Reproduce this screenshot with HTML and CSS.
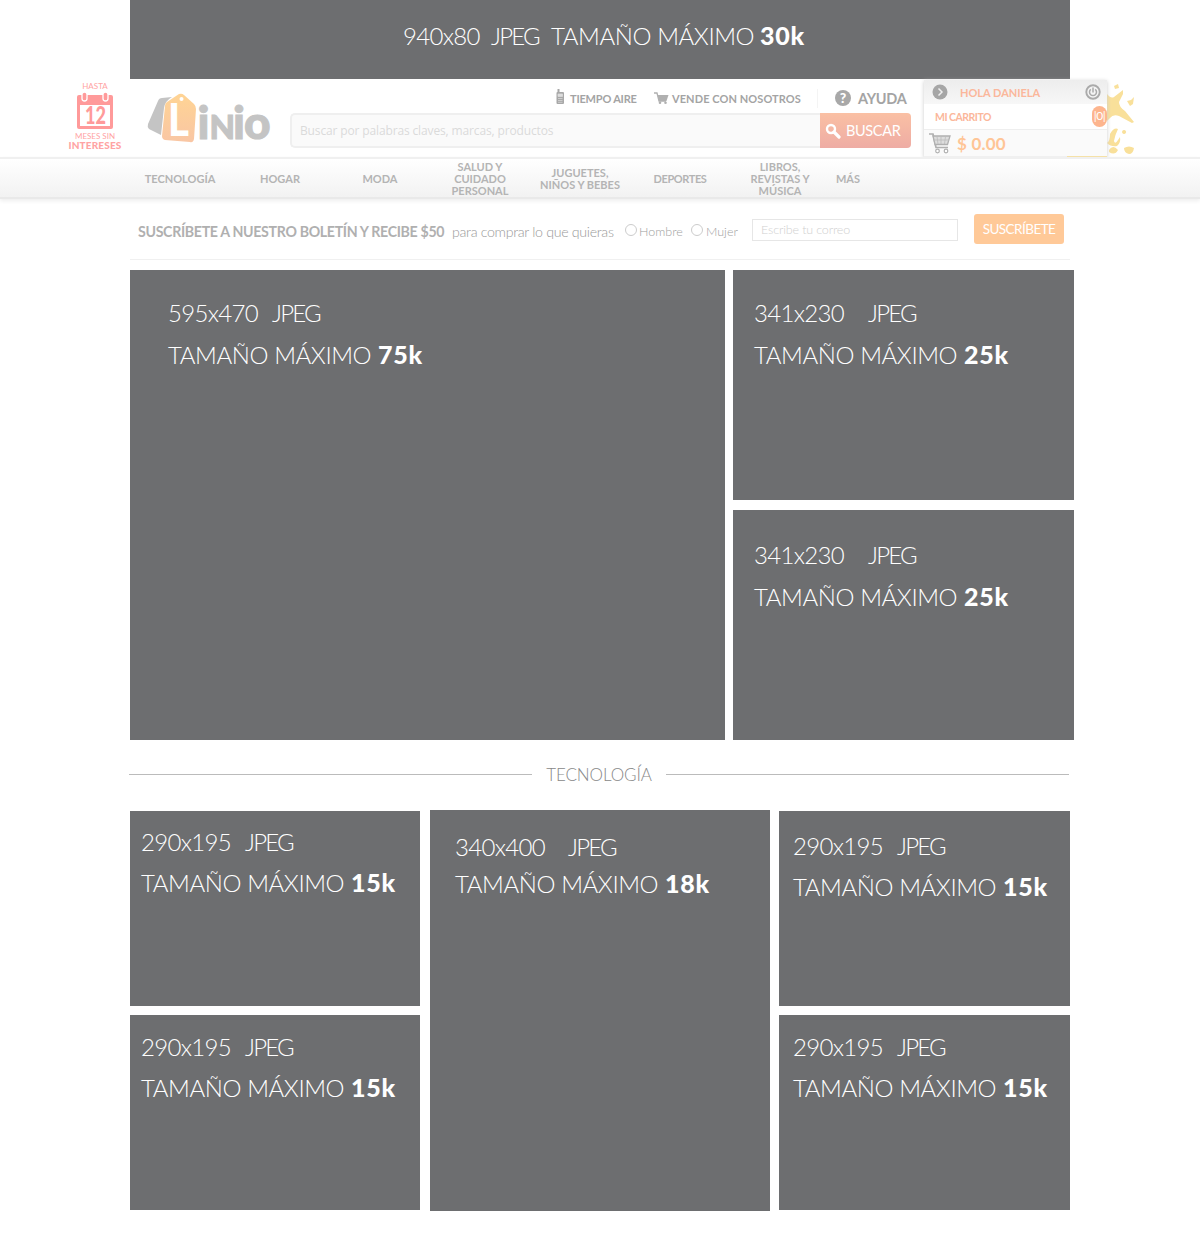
FILE: index.html
```html
<!DOCTYPE html>
<html lang="es">
<head>
<meta charset="utf-8">
<title>Linio</title>
<link rel="stylesheet" href="styles.css">
</head>
<body>
<div class="banner"><span class="dim">940x80</span><span class="fmt">JPEG</span><span class="max">TAMAÑO MÁXIMO</span><b>30k</b></div>

<header class="header">
  <div class="promo">
    <span class="promo-small">HASTA</span>
    <svg class="calendar" width="38" height="39" viewBox="0 0 38 39">
      <path d="M3 4H35Q37 4 37 6V36Q37 38 35 38H3Q1 38 1 36V6Q1 4 3 4Z" fill="#ff9a9a"/>
      <rect x="4" y="14" width="30" height="21" fill="#fff"/>
      <rect x="6" y="1" width="5" height="9" rx="2.5" fill="#ff9a9a" stroke="#fff" stroke-width="1.3"/>
      <rect x="27" y="1" width="5" height="9" rx="2.5" fill="#ff9a9a" stroke="#fff" stroke-width="1.3"/>
      <text x="9" y="33" class="cal-num" textLength="21" lengthAdjust="spacingAndGlyphs">12</text>
    </svg>
    <span class="promo-small">MESES SIN</span>
    <span class="promo-strong">INTERESES</span>
  </div>
  <svg class="logo" width="128" height="56" viewBox="0 0 128 56">
    <defs><linearGradient id="tag" x1="0" y1="0" x2="0" y2="1"><stop offset="0" stop-color="#ffd494"/><stop offset="1" stop-color="#f9c6a4"/></linearGradient></defs>
    <path d="M15 5L25 4Q18 8 17 15L14 42L2 36Q0 34 1 31L11 8Q12 5 15 5Z" fill="#c4c4c4"/>
    <path d="M20 9L32 1Q35 0 37 2L47 11Q49 13 49 16L47 46Q46 50 43 49L18 47Q15 46 15 43L18 13Q18 10 20 9Z" fill="url(#tag)"/>
    <circle cx="34.500" cy="6" r="2" fill="#fff"/>
    <text x="21" y="43" class="logo-l" textLength="21" lengthAdjust="spacingAndGlyphs">L</text>
    <text y="45.500" class="logo-word"><tspan x="50.500" class="big">i</tspan><tspan x="62.500" class="cap">N</tspan><tspan x="86" class="big">i</tspan><tspan x="97" class="big">o</tspan></text>
  </svg>
  <div class="center">
    <div class="links">
      <svg class="phone" width="8" height="17" viewBox="0 0 8 17"><path d="M1.500 1H3.500V4H7Q8 4 8 5V15Q8 16 7 16H1.500Q.5 16 .5 15V5Q.5 4 1.500 4Z" fill="#a8a8a8"/><path d="M2 6H6.500V8.500H2ZM2 10.500H6.500M2 12.500H6.500M2 14.300H6.500" fill="#ddd" stroke="#ddd" stroke-width=".7"/></svg>
      <span class="l-time">TIEMPO AIRE</span>
      <svg class="cart-s" width="15" height="13" viewBox="0 0 15 13"><path d="M0 1H3L5 9H12" fill="none" stroke="#b0b0b0" stroke-width="1.300"/><path d="M3.500 3H14.500L12.500 9H5Z" fill="#b0b0b0"/><circle cx="6" cy="10.800" r="1.300" fill="#b0b0b0"/><circle cx="11.500" cy="10.800" r="1.300" fill="#b0b0b0"/></svg>
      <span class="l-sell">VENDE CON NOSOTROS</span>
      <span class="help"><span class="q">?</span><span class="l-help">AYUDA</span></span>
    </div>
    <div class="search">
      <span class="field">Buscar por palabras claves, marcas, productos</span>
      <span class="go"><svg width="16" height="16" viewBox="0 0 16 16"><circle cx="6" cy="6" r="4" fill="none" stroke="#fff" stroke-width="2.400"/><path d="M9 9L14 14" stroke="#fff" stroke-width="3.200" stroke-linecap="round"/></svg><span>BUSCAR</span></span>
    </div>
  </div>
  <div class="account">
    <div class="hello">
      <svg width="16" height="16" viewBox="0 0 16 16"><circle cx="8" cy="8" r="7.500" fill="#a6a6a6"/><path d="M6.500 4.500L10 8L6.500 11.500" fill="none" stroke="#eee" stroke-width="1.500"/></svg>
      <span class="name">HOLA DANIELA</span>
      <svg class="power" width="16" height="16" viewBox="0 0 16 16"><circle cx="8" cy="8" r="6.700" fill="#f4f4f4" stroke="#aaa" stroke-width="1.900"/><path d="M5.800 5.400A3.500 3.500 0 1 0 10.200 5.400M8 3.500V8.500" fill="none" stroke="#aaa" stroke-width="1.500"/></svg>
    </div>
    <div class="mycart">MI CARRITO<span class="count">|0|</span></div>
    <div class="total">
      <svg width="24" height="22" viewBox="0 0 24 22"><path d="M1 2H5L8 15.500H20" fill="none" stroke="#b0b0b0" stroke-width="1.700"/><path d="M5 4H22L19.500 12.500H7Z" fill="#ddd" stroke="#b0b0b0" stroke-width="1.300"/><path d="M9 4.500L10 12M13 4.500V12M17.500 4.500L16.500 12M6 8H21" stroke="#bbb" stroke-width=".8"/><circle cx="9.500" cy="19" r="1.800" fill="#fff" stroke="#b0b0b0" stroke-width="1.200"/><circle cx="18" cy="19" r="1.800" fill="#fff" stroke="#b0b0b0" stroke-width="1.200"/></svg>
      <span>$ 0.00</span>
    </div>
  </div>
  <svg class="splash" width="28" height="76" viewBox="0 0 28 76">
    <g fill="#f9e09a"><path d="M0 14Q4 19 7 17L16 10L16 14L12 22Q12 27 18 31L27 42L25 43L12 36Q6 34 3 38L0 41Z"/><path d="M7 6L11 4L12 8L8 9ZM20 21L24 20L27 17L26 24L23 26ZM17 50a2 2 0 1 0 .1 0Z"/><path d="M3 54Q7 47 11 49Q8 55 7 61Q8 65 11 60L13 57Q14 63 10 66Q4 67 0 63Q3 61 3 54ZM2 70Q6 64 11 70Q8 76 2 72ZM17 68Q22 65 27 68Q26 74 22 74Q17 73 17 68Z"/></g>
  </svg>
</header>

<nav class="nav">
  <a>TECNOLOGÍA</a><a>HOGAR</a><a>MODA</a><a>SALUD Y<br>CUIDADO<br>PERSONAL</a><a>JUGUETES,<br>NIÑOS Y BEBES</a><a class="tight">DEPORTES</a><a>LIBROS,<br>REVISTAS Y<br>MÚSICA</a><a class="more">MÁS</a>
</nav>

<section class="newsletter">
  <strong>SUSCRÍBETE A NUESTRO BOLETÍN Y RECIBE $50</strong>
  <span class="why">para comprar lo que quieras</span>
  <i class="radio"></i><span class="man">Hombre</span>
  <i class="radio"></i><span class="woman">Mujer</span>
  <span class="email">Escribe tu correo</span>
  <span class="subscribe">SUSCRÍBETE</span>
</section>

<main>
  <section class="hero">
    <div class="tile main-tile"><p><span class="dim">595x470</span><span class="fmt">JPEG</span></p><p><span class="max">TAMAÑO MÁXIMO</span><b>75k</b></p></div>
    <div class="tile side one"><p><span class="dim">341x230</span><span class="fmt">JPEG</span></p><p><span class="max">TAMAÑO MÁXIMO</span><b>25k</b></p></div>
    <div class="tile side two"><p><span class="dim">341x230</span><span class="fmt">JPEG</span></p><p><span class="max">TAMAÑO MÁXIMO</span><b>25k</b></p></div>
  </section>
  <h2>TECNOLOGÍA</h2>
  <section class="tech">
    <div class="col">
      <div class="tile small"><p><span class="dim">290x195</span><span class="fmt">JPEG</span></p><p><span class="max">TAMAÑO MÁXIMO</span><b>15k</b></p></div>
      <div class="tile small low"><p><span class="dim">290x195</span><span class="fmt">JPEG</span></p><p><span class="max">TAMAÑO MÁXIMO</span><b>15k</b></p></div>
    </div>
    <div class="tile tall"><p><span class="dim">340x400</span><span class="fmt">JPEG</span></p><p><span class="max">TAMAÑO MÁXIMO</span><b>18k</b></p></div>
    <div class="col right">
      <div class="tile small"><p><span class="dim">290x195</span><span class="fmt">JPEG</span></p><p><span class="max">TAMAÑO MÁXIMO</span><b>15k</b></p></div>
      <div class="tile small low"><p><span class="dim">290x195</span><span class="fmt">JPEG</span></p><p><span class="max">TAMAÑO MÁXIMO</span><b>15k</b></p></div>
    </div>
  </section>
</main>
</body>
</html>
```
FILE: styles.css
```css
* { box-sizing: border-box; }
body { margin: 0; background: #fff; font-family: Lato, "Liberation Sans", sans-serif; width: 1200px; height: 1233px; overflow: hidden; }
p, h2 { margin: 0; }
svg { display: block; flex: none; }

/* placeholder lettering */
.banner, .tile { background: #6d6e70; color: #fff; font-size: 24px; font-weight: 300; white-space: nowrap; }
.dim { display: inline-block; width: 104px; letter-spacing: -.7px; }
.fmt { display: inline-block; letter-spacing: -1.8px; }
.max { display: inline-block; width: 210px; letter-spacing: -.42px; }
.banner b, .tile b { font-weight: 900; font-size: 25px; line-height: 1; letter-spacing: .7px; }

.banner { width: 940px; height: 79px; margin: 0 auto; padding: 21px 0 0 273px; line-height: 30px; }
.banner .dim { width: 88px; }
.banner .fmt { width: 60px; }
.banner .max { width: 209px; }

/* header */
.header { display: flex; align-items: flex-start; height: 78px; padding-left: 69px; }
.promo { width: 52px; padding-top: 3px; display: flex; flex-direction: column; align-items: center; color: #ffa4a4; white-space: nowrap; }
.promo-small { font-size: 8px; line-height: 9px; }
.calendar { margin: 0 0 2px; }
.cal-num { font: 900 24px Lato, sans-serif; fill: #ff9a9a; }
.promo-strong { font-size: 10px; line-height: 9px; font-weight: 900; letter-spacing: .15px; }
.logo { margin: 14px 0 0 26px; }
.logo-l { font: 900 45px Lato, sans-serif; fill: #fff; }
.logo-word { fill: #c4c4c4; stroke: #c4c4c4; stroke-width: 1px; font-family: Lato, sans-serif; font-weight: 900; }
.logo-word .big { font-size: 46px; }
.logo-word .cap { font-size: 33px; }
.center { width: 621px; margin-left: 15px; }
.links { display: flex; align-items: center; height: 34px; padding: 4px 0 0 266px; font-size: 11px; font-weight: 700; color: #a4a4a4; white-space: nowrap; }
.phone { margin-top: -4px; }
.l-time { margin-left: 6px; width: 84px; letter-spacing: -.2px; }
.l-sell { margin-left: 3px; width: 145px; letter-spacing: .08px; }
.help { display: flex; align-items: center; height: 19px; border-left: 1px solid #f4f4f4; padding-left: 17px; }
.q { width: 16px; height: 16px; border-radius: 50%; background: #a8a8a8; color: #fff; font-size: 14px; font-weight: 900; line-height: 16px; text-align: center; }
.l-help { font-size: 14.500px; margin-left: 7px; letter-spacing: -.3px; }
.search { display: flex; height: 35px; }
.field { width: 530px; border: 2px solid #efefef; border-right: 0; border-radius: 5px 0 0 5px; background: #fafafa; color: #dadada; font: 12px/32px "Open Sans", sans-serif; letter-spacing: -.14px; padding-left: 8px; }
.go { width: 91px; display: flex; align-items: center; padding-left: 5px; border-radius: 0 4px 4px 0; background: linear-gradient(#fac0a4, #eeaca4); color: #fff; font-size: 14.500px; letter-spacing: -.35px; }
.go span { margin-left: 5px; }
.account { width: 183px; height: 77px; margin: 1px 0 0 13px; background: #fff; box-shadow: 0 1px 4px #ccc; position: relative; z-index: 1; }
.hello { display: flex; align-items: center; height: 24px; padding-left: 8px; background: linear-gradient(#ededed, #f7f7f7); }
.name { margin-left: 12px; width: 125px; font-size: 11px; font-weight: 700; color: #fbb79b; }
.mycart { position: relative; height: 26px; padding-left: 11px; font-size: 10.500px; line-height: 27px; font-weight: 700; letter-spacing: -.5px; color: #fbb79b; border-bottom: 1px solid #eee; }
.count { position: absolute; right: 0; top: 2px; width: 15px; height: 21px; border-radius: 8px; background: #fdb58e; color: #fff; font-size: 12px; font-weight: 400; line-height: 20px; text-align: center; }
.total { display: flex; align-items: center; height: 27px; padding-left: 4px; background: #fafafa; border-bottom: 1px solid #f6e6b8; border-image: linear-gradient(90deg, #f1f1f1 78%, #f6e0a0 78%) 1; color: #ffc596; font-size: 17px; font-weight: 700; letter-spacing: .2px; }
.total span { margin-left: 5px; }
.splash { margin-top: 1px; }

.nav { position: relative; z-index: 2; display: flex; align-items: center; height: 42px; padding-left: 130px; border-top: 2px solid #f0f0f0; border-bottom: 2px solid #e9e9e9; background: linear-gradient(#fff, #f2f2f2); box-shadow: 0 2px 4px #eee; color: #b4b4b4; font-size: 11px; line-height: 12px; font-weight: 700; text-align: center; }
.nav a { width: 100px; padding-top: 1px; }
.nav .tight { letter-spacing: -.4px; }
.nav .more { width: 36px; }

/* newsletter */
.newsletter { display: flex; align-items: center; width: 940px; height: 61px; margin: 0 auto; padding: 2px 0 0 8px; border-bottom: 1px solid #f0f0f0; color: #b0b0b0; white-space: nowrap; }
.newsletter strong { width: 314px; padding-top: 2px; font-size: 14.200px; letter-spacing: -.33px; }
.why { width: 173px; padding-top: 2px; font-size: 14.200px; font-weight: 300; letter-spacing: -.31px; color: #999; }
.radio { flex: none; width: 12px; height: 12px; border: 1.500px solid #ccc; border-radius: 50%; }
.man, .woman { font-size: 12.500px; font-weight: 300; color: #a0a0a0; padding-top: 2px; }
.man { margin-left: 2px; width: 52px; }
.woman { margin-left: 3px; width: 46px; }
.email { width: 206px; height: 22px; border: 1px solid #e6e6e6; padding-left: 8px; font-size: 12.500px; line-height: 20px; font-weight: 300; letter-spacing: -.15px; color: #d0d0d0; }
.subscribe { width: 90px; height: 30px; margin: -2px 0 0 16px; border-radius: 3px; background: #ffc998; color: #fff; font-size: 13.500px; line-height: 30px; text-align: center; letter-spacing: -.55px; }

/* tiles */
main { width: 944px; margin: 10px 0 0 130px; }
.tile { line-height: 42px; }
.hero { display: grid; grid-template: 230px 230px / 595px 341px; gap: 10px 8px; }
.main-tile { grid-row: 1 / 3; padding: 22px 0 0 38px; }
.side { padding: 22px 0 0 21px; }
.side.two { padding-top: 24px; }
.side .dim { width: 114px; }
h2 { display: flex; align-items: center; justify-content: space-between; width: 940px; height: 69px; margin: 0 0 1px -1px; font-size: 17px; font-weight: 300; color: #888; letter-spacing: -.1px; }
h2::before, h2::after { content: ""; width: 403px; height: 1px; background: #bbb; }
.tech { display: grid; grid-template-columns: 290px 340px 290px; column-gap: 10px; width: 940px; }
.col { display: grid; grid-template-rows: 195px 195px; gap: 9px; padding-top: 1px; }
.right { margin-left: -1px; }
.small { padding: 10px 0 0 11px; line-height: 41px; }
.right .small { padding: 14px 0 0 14px; }
.low, .right .low { padding-top: 11px; }
.tall { height: 401px; padding: 18px 0 0 25px; line-height: 37px; }
.tall .dim { width: 113px; }
```
